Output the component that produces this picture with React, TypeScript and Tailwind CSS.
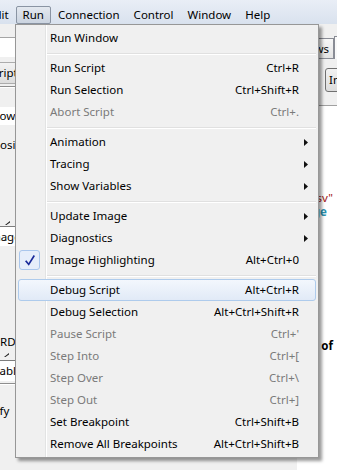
import React from 'react';
import clsx from 'clsx';

type Entry =
  | { sep: true }
  | {
      sep?: false;
      label: string;
      shortcut?: string;
      disabled?: boolean;
      submenu?: boolean;
      checked?: boolean;
      hover?: boolean;
    };

const runMenu: Entry[] = [
  { label: 'Run Window' },
  { sep: true },
  { label: 'Run Script', shortcut: 'Ctrl+R' },
  { label: 'Run Selection', shortcut: 'Ctrl+Shift+R' },
  { label: 'Abort Script', shortcut: 'Ctrl+.', disabled: true },
  { sep: true },
  { label: 'Animation', submenu: true },
  { label: 'Tracing', submenu: true },
  { label: 'Show Variables', submenu: true },
  { sep: true },
  { label: 'Update Image', submenu: true },
  { label: 'Diagnostics', submenu: true },
  { label: 'Image Highlighting', shortcut: 'Alt+Ctrl+0', checked: true },
  { sep: true },
  { label: 'Debug Script', shortcut: 'Alt+Ctrl+R', hover: true },
  { label: 'Debug Selection', shortcut: 'Alt+Ctrl+Shift+R' },
  { label: 'Pause Script', shortcut: "Ctrl+'", disabled: true },
  { label: 'Step Into', shortcut: 'Ctrl+[', disabled: true },
  { label: 'Step Over', shortcut: 'Ctrl+\\', disabled: true },
  { label: 'Step Out', shortcut: 'Ctrl+]', disabled: true },
  { label: 'Set Breakpoint', shortcut: 'Ctrl+Shift+B' },
  { label: 'Remove All Breakpoints', shortcut: 'Alt+Ctrl+Shift+B' },
];

const menuBar = ['Edit', 'Run', 'Connection', 'Control', 'Window', 'Help'];

const SubmenuArrow = () => (
  <svg width="4" height="7" viewBox="0 0 4 7">
    <path d="M0 0L4 3.5L0 7Z" fill="#111" />
  </svg>
);

const CheckIcon = () => (
  <svg width="10" height="11" viewBox="0 0 10 11">
    <path d="M0 6.2L1.4 5.2L3.6 7.9L8.6 0L10 0.9L3.8 10.8Z" fill="#1a2b9a" />
  </svg>
);

const GripMark = () => (
  <svg width="5" height="4" viewBox="0 0 5 4">
    <path d="M0 4L5 0L5 1.5L1.5 4Z" fill="#222" />
  </svg>
);

const MenuRow = ({ entry }: { entry: Exclude<Entry, { sep: true }> }) => (
  <div
    className={clsx(
      'flex h-[22px] items-center rounded-[3px] border',
      entry.hover
        ? 'border-[#aecbec] bg-gradient-to-b from-[#f3f7fd] to-[#e1eaf7]'
        : 'border-transparent'
    )}
  >
    <div className="flex h-full w-[31px] shrink-0 items-center">
      {entry.checked && (
        <div className="flex h-[20px] w-[21px] items-center justify-center rounded-[3px] border border-[#a9c6ec] bg-[#e6eefa]">
          <CheckIcon />
        </div>
      )}
    </div>
    <span className={clsx('whitespace-nowrap', entry.disabled ? 'text-[#7a7a7a]' : 'text-black')}>
      {entry.label}
    </span>
    <span
      className={clsx(
        'ml-auto whitespace-nowrap',
        entry.disabled ? 'text-[#7a7a7a]' : 'text-black'
      )}
    >
      {entry.shortcut}
    </span>
    <div className="flex w-[16px] shrink-0 items-center pl-[5px]">
      {entry.submenu && <SubmenuArrow />}
    </div>
  </div>
);

const LeftPanel = () => (
  <div className="flex w-[60px] shrink-0 flex-col overflow-hidden text-black">
    <div className="h-[13px]" />
    <div className="h-[20px] border-t border-[#a5a5a5] bg-white" />
    <div className="h-[5px]" />
    <div className="flex h-[22px] items-center">
      <div className="ml-[-30px] flex h-full w-[90px] shrink-0 items-center rounded-[3px] border border-[#acacac] bg-gradient-to-b from-[#f3f3f3] to-[#dddddd] pl-[16px]">
        Script
      </div>
    </div>
    <div className="h-[2px]" />
    <div className="h-[2px] border-t border-[#8e8e8e] bg-white" />
    <div className="h-[19px]" />
    <div className="flex h-[18px] items-center bg-white">
      <span className="ml-[-14px] whitespace-nowrap">Show</span>
    </div>
    <div className="h-[13px]" />
    <div className="flex h-[14px] items-center">
      <span className="ml-[-7px] whitespace-nowrap">Position</span>
    </div>
    <div className="h-[67px]" />
    <div className="flex h-[7px] items-center pl-[5px]">
      <GripMark />
    </div>
    <div className="flex h-[20px] items-center border-t border-[#7d7d7d] bg-white">
      <span className="ml-[-14px] whitespace-nowrap">Image</span>
    </div>
    <div className="h-[89px]" />
    <div className="flex h-[14px] items-center">
      <span className="ml-[-25px] whitespace-nowrap">COORDINATES</span>
    </div>
    <div className="flex h-[11px] items-center pl-[4px]">
      <GripMark />
    </div>
    <div className="flex h-[21px] items-center border-t border-[#7d7d7d] bg-white">
      <span className="ml-[-14px] whitespace-nowrap">Enable</span>
    </div>
    <div className="h-[2px]" />
    <div className="h-[2px] border-t border-[#8e8e8e] bg-white" />
    <div className="h-[19px]" />
    <div className="flex h-[14px] items-center">
      <span className="ml-[-28px] whitespace-nowrap">Modify</span>
    </div>
  </div>
);

const RightPanel = () => (
  <div className="flex w-[40px] shrink-0 flex-col overflow-hidden text-black">
    <div className="h-[14px]" />
    <div className="flex h-[21px]">
      <div className="flex w-[37px] shrink-0 items-center justify-end border-r border-b border-t border-[#898c95] bg-gradient-to-b from-[#f7f7f7] to-[#e3e3e3] pr-[4px]">
        <span className="whitespace-nowrap">Windows</span>
      </div>
      <div className="-mt-[2px] flex-1 border-l border-t border-[#898c95] bg-[#f9f9f9]" />
    </div>
    <div className="flex h-[46px] flex-col pt-[9px]">
      <div className="ml-[28px] flex h-[24px] w-[40px] items-center rounded-[3px] border border-[#707070] bg-gradient-to-b from-[#f2f2f2] to-[#dcdcdc] pl-[3px]">
        <span className="whitespace-nowrap">Insert</span>
      </div>
    </div>
    <div className="flex flex-1 flex-col border-t border-[#a0a0a0] bg-white pt-[85px]">
      <div className="flex h-[14px] items-center justify-end pr-[4px] text-[#a31515]">
        <span className="whitespace-nowrap">data.csv"</span>
      </div>
      <div className="flex h-[14px] items-center justify-end pr-[10px] font-bold text-[#2b91af]">
        <span className="whitespace-nowrap">Image</span>
      </div>
      <div className="h-[120px]" />
      <div className="flex h-[14px] items-center justify-end pr-[4px] font-bold">
        <span className="whitespace-nowrap">of</span>
      </div>
    </div>
  </div>
);

export default function App() {
  return (
    <div className="relative h-[470px] w-[337px] overflow-hidden bg-[#f0f0f0] font-['Noto_Sans','Open_Sans',sans-serif] text-[11.5px] leading-none">
      <div className="flex h-[24px] items-end bg-gradient-to-b from-[#e9eef6] to-[#d9e2ee]">
        <div className="ml-[-19px] flex">
          {menuBar.map(name => (
            <div
              key={name}
              className={clsx(
                'flex h-[18px] items-center rounded-[2px] border px-[6px] text-black',
                name === 'Run'
                  ? 'border-[#8a94a3] bg-gradient-to-b from-[#e3e8ef] to-[#cbd4e0]'
                  : 'border-transparent'
              )}
            >
              {name}
            </div>
          ))}
        </div>
      </div>

      <div className="flex h-[446px]">
        <LeftPanel />
        <div className="flex-1" />
        <RightPanel />
      </div>

      {/* Run dropdown */}
      <div className="absolute left-[15px] top-[24px] w-[304px] border border-[#979797] bg-[linear-gradient(to_right,#f0f0f0_29px,#e2e3e3_29px,#e2e3e3_30px,#ffffff_30px,#ffffff_31px,#f0f0f0_31px)] p-[2px] shadow-[3px_3px_3px_rgba(0,0,0,0.4)]">
        {runMenu.map((entry, i) =>
          entry.sep ? (
            <div key={i} className="h-[8px] pl-[29px] pt-[4px]">
              <div className="h-px bg-[#e0e0e0]" />
              <div className="h-px bg-white" />
            </div>
          ) : (
            <MenuRow key={i} entry={entry} />
          )
        )}
      </div>
    </div>
  );
}
